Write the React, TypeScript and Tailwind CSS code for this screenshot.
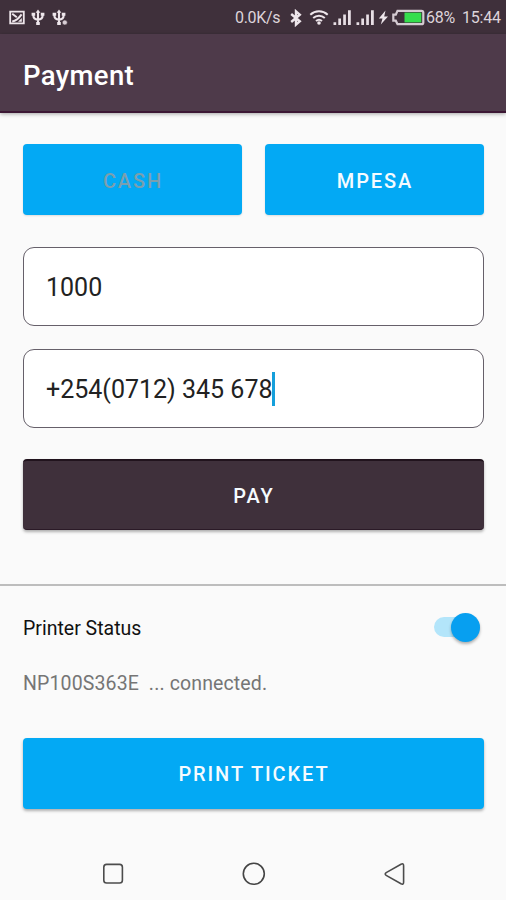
import React from 'react';

const StatusIcon = ({ width, className = '', children }: { width: number, className?: string, children: React.ReactNode }) => (
    <svg width={width} height="18" viewBox={`0 0 ${width} 18`} fill="none" className={`shrink-0 ${className}`}>
        {children}
    </svg>
);

const UsbShape = () => (
    <g stroke="#eee6eb" strokeWidth="2.1">
        <path d="M7 3V15.5M2.4 4.2v2.6q0 3.4 4.6 3.9q4.6-.5 4.6-3.9V4.2" />
        <path d="M7 .4L9.4 3.8H4.6z" fill="#eee6eb" stroke="none" />
        <path d="M.6 3.8h3.6v3H.6zM9.8 3.8h3.6v3H9.8zM5.2 13h3.6v3H5.2z" fill="#eee6eb" stroke="none" />
    </g>
);

const Signal = ({ className = '' }: { className?: string }) => (
    <StatusIcon width={19} className={className}>
        <path d="M.5 13.3h2.7V16H.5zM5.3 9.5H8V16H5.3zM10.2 5.5h2.7V16h-2.7zM15 1.3h2.8V16H15z" fill="#e8dfe5" />
    </StatusIcon>
);

const StatusBar = () => (
    <div className="flex h-[34px] items-center bg-[#3f303b] pt-0.5 text-base text-[#ddd4da]">
        <StatusIcon width={16} className="ml-[9px]">
            <path d="M1.2 2.6h13.6v11.8H1.2z" stroke="#eee6eb" strokeWidth="1.8" />
            <path d="M3.2 4.8l4.6 3.4M3.2 12.4q5-.6 9.4-7" stroke="#eee6eb" strokeWidth="2" />
            <path d="M12.8 9v3.8H9z" fill="#eee6eb" />
        </StatusIcon>
        <StatusIcon width={14} className="ml-[6px]">
            <UsbShape />
        </StatusIcon>
        <StatusIcon width={17} className="ml-[7px]">
            <UsbShape />
            <circle cx="12.8" cy="13.5" r="2.5" fill="#d9ced5" stroke="#3f303b" strokeWidth=".6" />
        </StatusIcon>
        <span className="ml-[166px] w-[47px] shrink-0 whitespace-nowrap tracking-[-0.3px]">0.0K/s</span>
        <StatusIcon width={14} className="ml-[7px]">
            <path d="M2.2 5l8.6 7.3L7 15.6V2.4l3.8 3.3L2.2 13" stroke="#eee6eb" strokeWidth="2.4" />
        </StatusIcon>
        <StatusIcon width={20} className="ml-[6px]">
            <path d="M1.3 5.7c5-4.6 12.4-4.6 17.4 0M4.2 8.9c3.4-3 8.2-3 11.6 0M7 12c1.8-1.5 4.2-1.5 6 0" stroke="#eee6eb" strokeWidth="2" />
            <circle cx="10" cy="14" r="1.8" fill="#eee6eb" />
        </StatusIcon>
        <Signal className="ml-[4px]" />
        <Signal className="ml-[4px]" />
        <StatusIcon width={11} className="ml-[3px]">
            <path d="M7.5 1.5L.8 9.5h3.7L2.8 15.5 10 7.4H6.2z" fill="#eee6eb" />
        </StatusIcon>
        <StatusIcon width={34} className="ml-[2px]">
            <path d="M6.5 1.8h24q1.8 0 1.8 1.8v9.8q0 1.8-1.8 1.8h-24L4.8 11.7H2.3V5.6h2.5z" stroke="#d5cbd2" strokeWidth="2.2" />
            <path d="M13.5 3.6h16.8v9.8H13.5z" fill="#35de4d" />
        </StatusIcon>
        <span className="ml-px w-[35px] shrink-0 whitespace-nowrap tracking-[-0.3px]">68%</span>
        <span className="ml-px whitespace-nowrap tracking-[-0.2px]">15:44</span>
    </div>
);

const Button = ({ label, variant = 'blue', disabled = false, flat = false }: { label: string, variant?: 'blue' | 'dark', disabled?: boolean, flat?: boolean }) => (
    <button
        disabled={disabled}
        className={`h-[71px] w-full rounded pl-px text-xl font-medium tracking-[1.9px] ${variant === 'dark' ? 'border-t-2 border-b border-t-[#21131d] border-b-[#2b1a27] bg-[#3f303b]' : 'bg-[#03a9f4]'} ${disabled ? 'text-[#7b9fae]' : 'text-[#f5fbff]'} ${flat ? 'pt-0.5 shadow-[0_1px_2px_rgba(0,0,0,0.12)]' : 'pt-px shadow-[0_2px_3px_rgba(0,0,0,0.3)]'}`}
    >
        {label}
    </button>
);

const Field = ({ value, focused = false }: { value: string, focused?: boolean }) => (
    <div className="flex h-[79px] items-center rounded-[11px] border border-[#66606a] bg-white pl-[22px] text-[25px] text-[#222]">
        <span className="pt-[3px]">{value}</span>
        {focused && <span className="-ml-px h-[34px] w-[3px] bg-[#149fdb]" />}
    </div>
);

const NavBar = () => (
    <div className="flex h-[52px] items-center justify-between pr-[100px] pl-[102px]">
        <svg width="22" height="22" fill="none" stroke="#4c4c4c" strokeWidth="1.6">
            <rect x="1.8" y="1.4" width="18.6" height="18.6" rx="2.8" />
        </svg>
        <svg width="24" height="24" fill="none" stroke="#444" strokeWidth="1.6">
            <circle cx="11.8" cy="11.8" r="10.5" />
        </svg>
        <svg width="22" height="24" fill="none" stroke="#4c4c4c" strokeWidth="1.6">
            <path d="M2.2 10.6L17 2.2q2.6-1.2 2.6 1.5v16.6q0 2.7-2.6 1.5L2.2 13.4q-2-1.4 0-2.8z" />
        </svg>
    </div>
);

export default function App() {
    return (
        <div className="flex h-[900px] w-[506px] flex-col overflow-hidden bg-[#fafafa] font-['Roboto',sans-serif]">
            <StatusBar />
            <header className="flex h-[79px] shrink-0 items-center border-b-2 border-[#3c1734] bg-[#4e3a4a] px-[23px] pt-[7px] shadow-[0_1px_4px_rgba(0,0,0,0.35)]">
                <h1 className="text-[27.5px] font-medium tracking-[0.35px] text-white">Payment</h1>
            </header>

            <main className="flex flex-col pt-[31px] pr-[22px] pl-[23px]">
                <div className="grid grid-cols-2 gap-[23px]">
                    <Button label="CASH" disabled flat />
                    <Button label="MPESA" flat />
                </div>
                <div className="mt-8 flex flex-col gap-[23px]">
                    <Field value="1000" />
                    <Field value="+254(0712) 345 678" focused />
                </div>
                <div className="mt-[31px]">
                    <Button label="PAY" variant="dark" />
                </div>
            </main>

            <section className="mt-[54px] flex flex-col border-t-2 border-[#bdbdbd] pr-[22px] pl-[23px]">
                <div className="mt-[26px] flex h-8 items-center justify-between text-[19.5px] text-[#111]">
                    <span className="pt-0.5">Printer Status</span>
                    <div className="mr-1 mb-0.5 flex h-[29px] w-[46px] items-center">
                        <div className="flex h-5 w-full items-center justify-end rounded-full bg-[#b3e5fa]">
                            <div className="h-[29px] w-[29px] rounded-full bg-[#079ff0] shadow-[0_2px_3px_rgba(0,0,0,0.3)]" />
                        </div>
                    </div>
                </div>
                <p className="mt-6 h-8 text-[19.5px] leading-8 tracking-[0.13px] whitespace-pre text-[#757575]">NP100S363E  ... connected.</p>
                <div className="mt-[38px]">
                    <Button label="PRINT TICKET" />
                </div>
            </section>
            <div className="mt-auto">
                <NavBar />
            </div>
        </div>
    );
}
